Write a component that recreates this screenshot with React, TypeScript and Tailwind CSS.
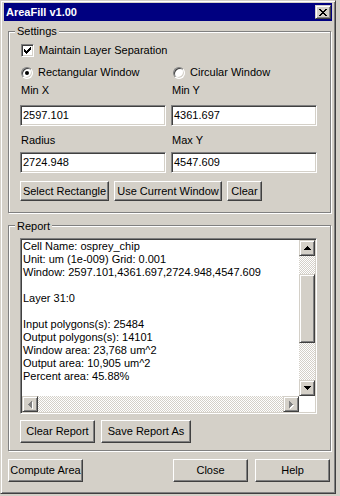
import type { ReactNode } from 'react';

// classic 3d edges
const raised =
  'border border-t-white border-l-white border-r-[#404040] border-b-[#404040] shadow-[inset_-1px_-1px_0_#808080]';
const raisedSmall =
  'border border-t-[#d4d0c8] border-l-[#d4d0c8] border-r-[#404040] border-b-[#404040] shadow-[inset_1px_1px_0_#fff,inset_-1px_-1px_0_#808080]';
const sunken =
  'border border-t-[#808080] border-l-[#808080] border-r-white border-b-white shadow-[inset_1px_1px_0_#404040,inset_-1px_-1px_0_#d4d0c8]';
const etched = 'border border-[#808080] shadow-[inset_1px_1px_0_#fff,1px_1px_0_#fff]';
const dither = 'bg-[image:repeating-conic-gradient(#fff_0_25%,#d4d0c8_0_50%)] bg-[length:2px_2px]';

const reportLines = [
  'Cell Name: osprey_chip',
  'Unit: um (1e-009) Grid: 0.001',
  'Window: 2597.101,4361.697,2724.948,4547.609',
  '',
  'Layer 31:0',
  '',
  'Input polygons(s): 25484',
  'Output polygons(s): 14101',
  'Window area: 23,768 um^2',
  'Output area: 10,905 um^2',
  'Percent area: 45.88%',
];

type Dir = 'up' | 'down' | 'left' | 'right';

const arrowPaths: Record<Dir, string> = {
  up: 'M3 0h1v1H3zM2 1h3v1H2zM1 2h5v1H1zM0 3h7v1H0z',
  down: 'M0 0h7v1H0zM1 1h5v1H1zM2 2h3v1H2zM3 3h1v1H3z',
  left: 'M3 0h1v7H3zM2 1h1v5H2zM1 2h1v3H1zM0 3h1v1H0z',
  right: 'M0 0h1v7H0zM1 1h1v5H1zM2 2h1v3H2zM3 3h1v1H3z',
};

function Arrow({ dir, disabled }: { dir: Dir; disabled?: boolean }) {
  const vertical = dir === 'up' || dir === 'down';
  const w = vertical ? 8 : 5;
  const h = vertical ? 5 : 8;
  return (
    <svg width={w} height={h} viewBox={`0 0 ${w} ${h}`} shapeRendering="crispEdges" className="ml-[1px] mt-[1px]">
      {disabled && <path d={arrowPaths[dir]} fill="#fff" transform="translate(1 1)" />}
      <path d={arrowPaths[dir]} fill={disabled ? '#808080' : '#000'} />
    </svg>
  );
}

function ScrollButton({ dir, disabled }: { dir: Dir; disabled?: boolean }) {
  return (
    <div className={`flex h-[16px] w-[16px] shrink-0 items-center justify-center bg-[#d4d0c8] ${raisedSmall}`}>
      <Arrow dir={dir} disabled={disabled} />
    </div>
  );
}

function Button({ className, children }: { className: string; children: ReactNode }) {
  return (
    <button
      type="button"
      className={`flex shrink-0 items-center justify-center whitespace-nowrap bg-[#d4d0c8] ${raised} ${className}`}
    >
      {children}
    </button>
  );
}

function Field({ value }: { value: string }) {
  return (
    <div className={`flex h-[21px] w-[146px] items-center bg-white pl-[2px] ${sunken}`}>{value}</div>
  );
}

function Checkbox() {
  return (
    <div className={`flex h-[13px] w-[13px] items-center justify-center bg-white ${sunken}`}>
      <svg width="7" height="7" viewBox="0 0 7 7" shapeRendering="crispEdges">
        <path
          d="M0 2h1v3H0zM1 3h1v3H1zM2 4h1v3H2zM3 3h1v3H3zM4 2h1v3H4zM5 1h1v3H5zM6 0h1v3H6z"
          fill="#000"
        />
      </svg>
    </div>
  );
}

function Radio({ checked }: { checked?: boolean }) {
  return (
    <div className={`flex h-[12px] w-[12px] items-center justify-center rounded-full bg-white ${sunken}`}>
      {checked && <div className="h-[4px] w-[4px] rounded-full bg-black" />}
    </div>
  );
}

function GroupBox({
  title,
  className,
  labelClass,
  children,
}: {
  title: string;
  className: string;
  labelClass: string;
  children: ReactNode;
}) {
  return (
    <div className={`relative ml-[4px] w-[323px] shrink-0 ${etched} ${className}`}>
      <span className={`absolute left-[6px] bg-[#d4d0c8] px-[2px] leading-[13px] ${labelClass}`}>{title}</span>
      {children}
    </div>
  );
}

function TitleBar() {
  return (
    <div className="flex h-[18px] shrink-0 items-center justify-between bg-[#000080] pl-[2px] pr-[1px]">
      <span className="font-bold text-white">AreaFill v1.00</span>
      <div className={`flex h-[14px] w-[16px] items-center justify-center bg-[#d4d0c8] ${raisedSmall}`}>
        <svg width="8" height="7" viewBox="0 0 8 7" shapeRendering="crispEdges">
          <path
            d="M0 0h2v1H0zM6 0h2v1H6zM1 1h2v1H1zM5 1h2v1H5zM2 2h4v1H2zM3 3h2v1H3zM2 4h4v1H2zM1 5h2v1H1zM5 5h2v1H5zM0 6h2v1H0zM6 6h2v1H6z"
            fill="#000"
          />
        </svg>
      </div>
    </div>
  );
}

function Settings() {
  return (
    <GroupBox title="Settings" className="mt-[10px] h-[182px]" labelClass="top-[-7px]">
      <div className="flex flex-col pl-[11px]">
        <div className="ml-[1px] mt-[12px] flex h-[13px] items-center gap-[5px]">
          <Checkbox />
          <span>Maintain Layer Separation</span>
        </div>
        <div className="mt-[9px] grid h-[13px] grid-cols-[146px_146px] gap-x-[5px]">
          <div className="ml-[1px] flex items-center gap-[5px]">
            <Radio checked />
            <span>Rectangular Window</span>
          </div>
          <div className="ml-[2px] flex items-center gap-[5px]">
            <Radio />
            <span>Circular Window</span>
          </div>
        </div>
        <div className="mt-[5px] grid h-[13px] grid-cols-[146px_146px] gap-x-[5px]">
          <span className="ml-[1px]">Min X</span>
          <span className="ml-[1px]">Min Y</span>
        </div>
        <div className="mt-[8px] flex gap-[5px]">
          <Field value="2597.101" />
          <Field value="4361.697" />
        </div>
        <div className="mt-[8px] grid h-[13px] grid-cols-[146px_146px] gap-x-[5px]">
          <span className="ml-[1px]">Radius</span>
          <span className="ml-[1px]">Max Y</span>
        </div>
        <div className="mt-[5px] flex gap-[5px]">
          <Field value="2724.948" />
          <Field value="4547.609" />
        </div>
        <div className="mt-[8px] flex gap-[5px]">
          <Button className="h-[20px] w-[89px]">Select Rectangle</Button>
          <Button className="h-[20px] w-[108px]">Use Current Window</Button>
          <Button className="h-[20px] w-[35px]">Clear</Button>
        </div>
      </div>
    </GroupBox>
  );
}

function ReportBox() {
  return (
    <div className={`ml-[11px] mt-[12px] flex h-[176px] w-[297px] flex-col bg-white p-[1px] ${sunken}`}>
      <div className="flex h-[156px]">
        <div className="flex-1 overflow-hidden whitespace-pre pl-[1px]">
          {reportLines.map((line, i) => (
            <div key={i} className="h-[13px]">
              {line}
            </div>
          ))}
        </div>
        <div className="flex w-[16px] flex-col">
          <ScrollButton dir="up" />
          <div className={`h-[18px] ${dither}`} />
          <div className={`h-[69px] bg-[#d4d0c8] ${raisedSmall}`} />
          <div className={`flex-1 ${dither}`} />
          <ScrollButton dir="down" />
        </div>
      </div>
      <div className="flex h-[16px]">
        <ScrollButton dir="left" disabled />
        <div className={`flex-1 ${dither}`} />
        <ScrollButton dir="right" disabled />
        <div className="w-[16px] bg-white" />
      </div>
    </div>
  );
}

function Report() {
  return (
    <GroupBox title="Report" className="mt-[12px] h-[226px]" labelClass="top-[-6px]">
      <ReportBox />
      <div className="ml-[11px] mt-[6px] flex gap-[6px]">
        <Button className="h-[23px] w-[75px]">Clear Report</Button>
        <Button className="h-[23px] w-[90px]">Save Report As</Button>
      </div>
    </GroupBox>
  );
}

export default function App() {
  return (
    <div className="h-[496px] w-[340px] bg-[#d4d0c8] font-['Liberation_Sans',Arial,sans-serif] text-[11px] leading-[13px] text-black">
      <div className="flex h-[494px] w-[336px] flex-col border border-b-[#404040] border-l-[#d4d0c8] border-r-[#404040] border-t-[#d4d0c8] px-[3px] pt-[2px] shadow-[inset_1px_1px_0_#fff,inset_-1px_-1px_0_#808080]">
        <TitleBar />
        <Settings />
        <Report />
        <div className="ml-[4px] mt-[8px] flex w-[322px]">
          <Button className="h-[23px] w-[75px]">Compute Area</Button>
          <Button className="ml-auto h-[23px] w-[75px]">Close</Button>
          <Button className="ml-[7px] h-[23px] w-[75px]">Help</Button>
        </div>
      </div>
    </div>
  );
}
